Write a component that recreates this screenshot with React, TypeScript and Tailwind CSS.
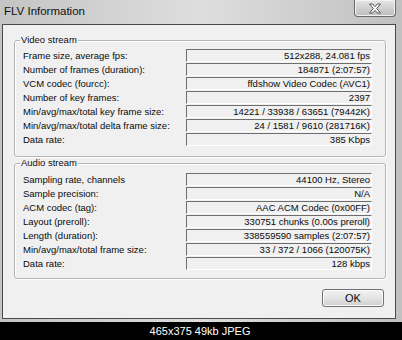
const videoRows: [string, string][] = [
  ['Frame size, average fps:', '512x288, 24.081 fps'],
  ['Number of frames (duration):', '184871 (2:07:57)'],
  ['VCM codec (fourcc):', 'ffdshow Video Codec  (AVC1)'],
  ['Number of key frames:', '2397'],
  ['Min/avg/max/total key frame size:', '14221 / 33938 / 63651 (79442K)'],
  ['Min/avg/max/total delta frame size:', '24 / 1581 / 9610 (281716K)'],
  ['Data rate:', '385 Kbps'],
];

const audioRows: [string, string][] = [
  ['Sampling rate, channels', '44100 Hz, Stereo'],
  ['Sample precision:', 'N/A'],
  ['ACM codec (tag):', 'AAC ACM Codec (0x00FF)'],
  ['Layout (preroll):', '330751 chunks (0.00s preroll)'],
  ['Length (duration):', '338559590 samples (2:07:57)'],
  ['Min/avg/max/total frame size:', '33 / 372 / 1066 (120075K)'],
  ['Data rate:', '128 kbps'],
];

function InfoRow({ label, value }: { label: string; value: string }) {
  return (
    <div className="flex h-[14px] items-start">
      <div className="flex-1 pl-[8px] leading-[13px]">{label}</div>
      <div className="h-[13px] w-[186px] border-t border-l border-t-[#6e6e6e] border-l-[#6e6e6e] border-b border-r border-b-[#ffffff] border-r-[#ffffff] bg-[#f0f0f0] pr-[1px] text-right leading-[12px]">
        {value}
      </div>
    </div>
  );
}

function GroupBox({
  title,
  rows,
  className,
}: {
  title: string;
  rows: [string, string][];
  className: string;
}) {
  return (
    <fieldset
      className={`rounded-[3px] border border-[#b4b4b4] pr-[13px] shadow-[inset_1px_1px_0_#ffffff,1px_1px_0_#ffffff] ${className}`}
    >
      <legend className="ml-[5px] px-[1px] leading-[12px]">{title}</legend>
      {rows.map(([label, value]) => (
        <InfoRow key={label} label={label} value={value} />
      ))}
    </fieldset>
  );
}

export default function App() {
  return (
    <div
      className="flex h-[340px] w-[402px] flex-col bg-black text-[9.5px] text-[#0a0a0a]"
      style={{ fontFamily: '"Liberation Sans", Arial, sans-serif' }}
    >
      {/* Window frame */}
      <div className="flex h-[322px] flex-col bg-gradient-to-r from-[#c4c4c4] via-[#dedede] to-[#c0c0c0] pl-[2px] pr-[6px] pb-[3px]">
        {/* Title bar */}
        <div className="flex h-[24px] items-start justify-between">
          <div className="pl-[2px] pt-[4px] text-[11.5px] leading-[14px] text-[#101010]">FLV Information</div>
          <button className="flex h-[17px] w-[42px] items-center justify-center rounded-b-[4px] border border-t-0 border-[#6a6a6a] bg-gradient-to-b from-[#e6e6e6] to-[#bcbcbc] shadow-[inset_0_0_0_1px_#f2f2f2]">
            <svg width="14" height="11" viewBox="0 0 14 11">
              <path
                d="M1.5 1 L4.6 1 L7 3.6 L9.4 1 L12.5 1 L8.7 5.5 L12.5 10 L9.4 10 L7 7.4 L4.6 10 L1.5 10 L5.3 5.5 Z"
                fill="#f8f8f8"
                stroke="#555555"
                strokeWidth="1"
                strokeLinejoin="round"
              />
            </svg>
          </button>
        </div>

        {/* Client area */}
        <div className="flex flex-1 flex-col border border-[#4a4a4a] bg-[#f0f0f0] pl-[11px] pr-[9px] pt-[9px]">
          <GroupBox title="Video stream" rows={videoRows} className="pt-[3px] pb-[9px]" />
          <GroupBox title="Audio stream" rows={audioRows} className="pt-[4px] pb-[7px]" />
          <div className="mt-[10px] flex justify-end pr-[2px]">
            <button className="h-[18px] w-[62px] rounded-[3px] border border-[#707070] bg-gradient-to-b from-[#f2f2f2] via-[#e4e4e4] to-[#cfcfcf] text-[11px] leading-[15px] shadow-[inset_0_0_0_1px_#fafafa]">
              OK
            </button>
          </div>
        </div>
      </div>

      {/* Image caption */}
      <div className="flex flex-1 items-center justify-center pr-[2px] text-[11px] leading-[12px] text-white">
        465x375 49kb JPEG
      </div>
    </div>
  );
}
